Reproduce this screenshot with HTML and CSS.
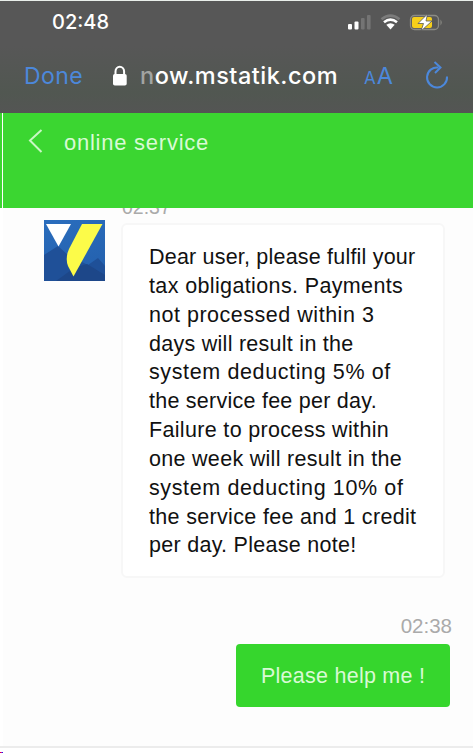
FILE: index.html
```
<!DOCTYPE html>
<html lang="en">
<head>
<meta charset="utf-8">
<title>online service</title>
<link rel="stylesheet" href="styles.css">
</head>
<body>
<div class="screen">
  <header class="browser">
    <div class="status">
      <span class="clock">02:48</span>
      <svg class="status-icons" width="98" height="20" viewBox="0 0 98 20">
        <rect x="1" y="11" width="4" height="5.500" rx="1" fill="#fff"/>
        <rect x="7.500" y="8.500" width="4" height="8" rx="1" fill="#fff"/>
        <rect x="14" y="5" width="3.600" height="11.500" rx="1" fill="#747474"/>
        <rect x="20" y="2" width="3.600" height="14.500" rx="1" fill="#747474"/>
        <g fill="none" stroke-width="2.600">
          <path d="M34.500 6.300Q43.500-1 52.500 6.300" stroke="#7b7b7b"/>
          <path d="M37 9.300Q43.500 4 50 9.300" stroke="#fff"/>
        </g>
        <path d="M39.300 11.800Q43.500 8.500 47.700 11.800L43.500 16.500Z" fill="#fff"/>
        <rect x="63.500" y="2.500" width="28" height="14" rx="4" fill="none" stroke="#8b8b85" stroke-width="1.300"/>
        <rect x="65" y="4" width="20" height="11" rx="2" fill="#f6cf1b"/>
        <path d="M93.500 6.500Q96 9.500 93.500 12.500Z" fill="#8b8b85"/>
        <path d="M80.500 1L71 10.500H76.500L74 18L85 8H79Z" fill="#fff" stroke="#575757" stroke-width="0.800"/>
      </svg>
    </div>
    <div class="address">
      <span class="done">Done</span>
      <svg class="lock" width="16" height="22" viewBox="0 0 16 22">
        <path d="M3.500 10V6.500a4.300 4.800 0 0 1 8.600 0V10" fill="none" stroke="#fff" stroke-width="2"/>
        <rect x="1" y="9" width="13.700" height="11.500" rx="1.800" fill="#fff"/>
      </svg>
      <span class="url"><span class="fade">n</span>ow.mstatik.com</span>
      <span class="reader"><small>A</small>A</span>
      <svg class="reload" width="24" height="30" viewBox="0 0 24 30" fill="none" stroke="#4c88db" stroke-width="2">
        <path d="M13.500 7.500A10 10 0 1 0 22 16.500"/>
        <path d="M9.500 2L15.500 7.500L10 13"/>
      </svg>
    </div>
  </header>
  <div class="titlebar">
    <svg class="back" width="15" height="26" viewBox="0 0 15 26"><path d="M13.500 2L2 12.500L13.500 24" fill="none" stroke="#c9f7c4" stroke-width="2"/></svg>
    <h1>online service</h1>
  </div>
  <main class="chat">
    <div class="clipped"><time>02:37</time></div>
    <div class="incoming">
      <svg class="avatar" width="61" height="61" viewBox="0 0 61 61">
        <defs><linearGradient id="sky" x2="0.300" y2="1"><stop offset="0" stop-color="#2a6dbd"/><stop offset="1" stop-color="#2461ae"/></linearGradient></defs>
        <path d="M0 0H61V61H0Z" fill="url(#sky)"/>
        <path d="M0 35L14 26L24 35L44 45L54 38L61 46V61H0Z" fill="#1f5098"/>
        <path d="M12 61L30 48L43 44L61 55V61Z" fill="#1d4789"/>
        <path d="M2 4H27L14.500 26.500Z" fill="#fff"/>
        <path d="M38 4H58.500L29.500 56.500L24 46Q21 38 25 29Z" fill="#fcfb49"/>
      </svg>
      <div class="bubble">
        <p class="l1">Dear user, please fulfil your</p>
        <p class="l2">tax obligations. Payments</p>
        <p class="l3">not processed within 3</p>
        <p class="l4">days will result in the</p>
        <p class="l5">system deducting 5% of</p>
        <p class="l6">the service fee per day.</p>
        <p class="l7">Failure to process within</p>
        <p class="l8">one week will result in the</p>
        <p class="l9">system deducting 10% of</p>
        <p class="l10">the service fee and 1 credit</p>
        <p class="l11">per day. Please note!</p>
      </div>
    </div>
    <div class="outgoing">
      <time>02:38</time>
      <div class="reply">Please help me !</div>
    </div>
  </main>
  <footer class="foot"><i></i></footer>
</div>
</body>
</html>
```
FILE: styles.css
```
* { box-sizing: border-box; }
body { margin: 0; background: #fdfdfd; font-family: "Liberation Sans", Arial, sans-serif; }
.screen { width: 473px; height: 753px; overflow: hidden; display: flex; flex-direction: column; }
p, h1 { margin: 0; font-weight: 400; }
.browser { height: 113px; flex: none; border-top: 1px solid #e9eeea; background: linear-gradient(#575757 0 40%, #515751 82%, #545554); }
.status { display: flex; justify-content: space-between; height: 43px; padding: 11px 28px 0 52px; color: #fff; }
.clock { font: 500 20px/21px Inter, sans-serif; }
.status-icons { display: block; margin-top: 1px; }
.address { display: flex; align-items: center; height: 64px; padding-left: 24px; color: #fff; }
.done { width: 88px; font: 400 23px/30px Inter, sans-serif; letter-spacing: .4px; color: #4c88db; }
.lock { margin-right: 12px; }
.url { width: 224px; white-space: nowrap; font: 500 23.500px/30px Inter, sans-serif; letter-spacing: .5px; }
.fade { color: #a2a4a2; }
.reader { width: 61px; color: #4c88db; font: 400 23.500px/30px Inter, sans-serif; white-space: nowrap; padding-top: 2px; }
.reader small { font-size: 17px; letter-spacing: 1px; }
.reload { margin-top: -2px; }
.titlebar { height: 95px; flex: none; display: flex; align-items: flex-start; padding: 15px 0 0 28px; background: linear-gradient(90deg, #3bd631 0 2px, #fff 2px 3px, #3bd631 3px); color: #d9fad5; }
.back { margin-right: 21px; }
h1 { font-size: 22px; line-height: 30px; letter-spacing: .75px; }
.chat { flex: 1; min-height: 0; border-left: 3px solid #fff; }
.clipped { height: 12px; overflow: hidden; display: flex; align-items: flex-end; padding-left: 119px; }
.chat time { color: #aaa; font-size: 20.500px; line-height: 22px; }
.clipped time { margin-bottom: 2px; font-size: 19.500px; }
.incoming { display: flex; align-items: flex-start; padding: 0 0 0 41px; }
.bubble { width: 324px; height: 355px; margin: 3px 0 0 16px; padding: 18px 0 0 26px; background: #fff; border: 2px solid #f7f7f7; border-radius: 6px; color: #111; font-size: 21.500px; line-height: 28.850px; white-space: nowrap; }
.l1 { letter-spacing: .2px; }
.l2 { letter-spacing: .37px; }
.l3 { letter-spacing: .52px; }
.l4 { letter-spacing: .27px; }
.l5 { letter-spacing: .62px; }
.l6 { letter-spacing: .25px; }
.l7 { letter-spacing: .33px; }
.l8 { letter-spacing: .3px; }
.l9 { letter-spacing: .62px; }
.l10 { letter-spacing: .33px; }
.l11 { letter-spacing: .28px; }
.outgoing { display: flex; flex-direction: column; align-items: flex-end; padding: 37px 23px 0 0; }
.outgoing time { margin-right: -2px; }
.reply { width: 214px; height: 63px; margin-top: 7px; padding-left: 25px; border-radius: 4px; background: #36d62d; color: #d9fad5; font-size: 21.500px; line-height: 64px; letter-spacing: .25px; }
.foot { height: 7px; flex: none; border-top: 2px solid #ececec; background: #fff; display: flex; align-items: flex-end; }
.foot i { width: 3px; height: 1px; background: linear-gradient(90deg, #e00040 0 1px, #b000c0 1px 2px, #2020e0 2px); }
```
